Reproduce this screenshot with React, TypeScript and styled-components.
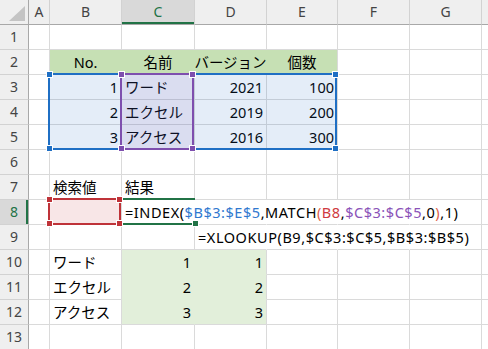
import React from "react";
import styled, { createGlobalStyle } from "styled-components";

const GlobalStyle = createGlobalStyle`
  html, body {
    margin: 0;
    padding: 0;
    background: #ffffff;
  }
  body {
    width: 488px;
    height: 349px;
    overflow: hidden;
    font-family: "Noto Sans", "Noto Sans CJK JP", sans-serif;
  }
`;

const GRID = "#dadada";
const HEAD_LINE = "#d2d2d2";
const HEAD_EDGE = "#a8a8a8";
const ACTIVE = "#217346";

const COL_WIDTHS = [29, 21, 72, 73, 72, 71, 72, 72];
const COLS = ["A", "B", "C", "D", "E", "F", "G", ""];

const Sheet = styled.div`
  position: relative;
  display: grid;
  grid-template-columns: ${COL_WIDTHS.map((w) => w + "px").join(" ")} 1fr;
  grid-auto-rows: 25px;
  width: 488px;
  height: 349px;
  overflow: hidden;
`;

const Corner = styled.div`
  box-sizing: border-box;
  background: #efefef;
  border-right: 1px solid ${HEAD_EDGE};
  border-bottom: 1px solid ${HEAD_EDGE};
  display: flex;
  align-items: flex-end;
  justify-content: flex-end;
  padding: 0 3px 3px 0;
`;

const ColHead = styled.div<{ $active?: boolean }>`
  box-sizing: border-box;
  background: ${(p) => (p.$active ? "#d9d9d9" : "#efefef")};
  border-right: 1px solid ${HEAD_LINE};
  border-bottom: 1px solid ${HEAD_EDGE};
  box-shadow: ${(p) => (p.$active ? `inset 0 -2px 0 ${ACTIVE}` : "none")};
  color: ${(p) => (p.$active ? ACTIVE : "#444444")};
  display: flex;
  align-items: center;
  justify-content: center;
  font-size: 14px;
  line-height: 1;
`;

const RowHead = styled.div<{ $active?: boolean }>`
  box-sizing: border-box;
  background: ${(p) => (p.$active ? "#d9d9d9" : "#efefef")};
  border-right: 1px solid ${HEAD_EDGE};
  border-bottom: 1px solid ${HEAD_LINE};
  box-shadow: ${(p) => (p.$active ? `inset -2px 0 0 ${ACTIVE}` : "none")};
  color: ${(p) => (p.$active ? ACTIVE : "#444444")};
  display: flex;
  align-items: center;
  justify-content: center;
  font-size: 14px;
  line-height: 1;
`;

type Align = "left" | "right" | "center";

const justify = { left: "flex-start", right: "flex-end", center: "center" };

const Cell = styled.div<{
  $align: Align;
  $fill?: string;
  $joinRight?: boolean;
  $joinDown?: boolean;
}>`
  box-sizing: border-box;
  min-width: 0;
  background: ${(p) => p.$fill || "transparent"};
  border-right: 1px solid
    ${(p) => (p.$joinRight ? p.$fill || "transparent" : GRID)};
  border-bottom: 1px solid ${(p) => (p.$joinDown ? p.$fill : GRID)};
  display: flex;
  align-items: center;
  justify-content: ${(p) => justify[p.$align]};
  padding: 0 3px;
  font-size: 14.5px;
  line-height: 1;
  color: #000000;
  white-space: nowrap;
`;

const Formula = styled.span`
  letter-spacing: 0.55px;
`;

const Tok = styled.span<{ $c: string }>`
  color: ${(p) => p.$c};
`;

const RefBox = styled.div<{
  $x: number;
  $y: number;
  $w: number;
  $h: number;
  $color: string;
  $tint: string;
}>`
  position: absolute;
  box-sizing: border-box;
  left: ${(p) => p.$x}px;
  top: ${(p) => p.$y}px;
  width: ${(p) => p.$w}px;
  height: ${(p) => p.$h}px;
  border: 2px solid ${(p) => p.$color};
  background: ${(p) => p.$tint};
  pointer-events: none;
`;

/* the editing cell: its sides are covered by the neighbour box and by the text */
const EditFrame = styled.div<{ $x: number; $y: number; $w: number; $h: number }>`
  position: absolute;
  box-sizing: border-box;
  left: ${(p) => p.$x}px;
  top: ${(p) => p.$y}px;
  width: ${(p) => p.$w}px;
  height: ${(p) => p.$h}px;
  border-top: 2px solid ${ACTIVE};
  border-bottom: 2px solid ${ACTIVE};
  pointer-events: none;
`;

const Handle = styled.span<{ $color: string; $at: "tl" | "tr" | "bl" | "br" }>`
  position: absolute;
  box-sizing: border-box;
  width: 7px;
  height: 7px;
  background: ${(p) => p.$color};
  border: 1px solid #ffffff;
  ${(p) => (p.$at[0] === "t" ? "top: -4px;" : "bottom: -4px;")}
  ${(p) => (p.$at[1] === "l" ? "left: -4px;" : "right: -4px;")}
`;

const BLUE = "#1f6fc4";
const PURPLE = "#7e4fae";
const RED = "#bf3339";

type Spec = {
  text?: React.ReactNode;
  align?: Align;
  fill?: string;
  joinRight?: boolean;
  joinDown?: boolean;
};

const HEAD_FILL = "#c6e0b4";
const RESULT_FILL = "#e2efda";

const formula1 = (
  <Formula>
    <Tok $c="#000">=INDEX(</Tok>
    <Tok $c="#2f78cf">$B$3:$E$5</Tok>
    <Tok $c="#000">,MATCH</Tok>
    <Tok $c="#e0604a">(</Tok>
    <Tok $c="#cf3a40">B8</Tok>
    <Tok $c="#000">,</Tok>
    <Tok $c="#8a52b8">$C$3:$C$5</Tok>
    <Tok $c="#000">,0</Tok>
    <Tok $c="#e0604a">)</Tok>
    <Tok $c="#000">,1)</Tok>
  </Formula>
);

const formula2 = <Formula>=XLOOKUP(B9,$C$3:$C$5,$B$3:$B$5)</Formula>;

const cells: Record<string, Spec> = {
  B2: { text: "No.", align: "center", fill: HEAD_FILL, joinRight: true },
  C2: { text: "名前", align: "center", fill: HEAD_FILL, joinRight: true },
  D2: { text: "バージョン", align: "center", fill: HEAD_FILL, joinRight: true },
  E2: { text: "個数", align: "center", fill: HEAD_FILL },
  B3: { text: "1", align: "right" },
  C3: { text: "ワード" },
  D3: { text: "2021", align: "right" },
  E3: { text: "100", align: "right" },
  B4: { text: "2", align: "right" },
  C4: { text: "エクセル" },
  D4: { text: "2019", align: "right" },
  E4: { text: "200", align: "right" },
  B5: { text: "3", align: "right" },
  C5: { text: "アクセス" },
  D5: { text: "2016", align: "right" },
  E5: { text: "300", align: "right" },
  B7: { text: "検索値" },
  C7: { text: "結果" },
  C8: { text: formula1, joinRight: true },
  D8: { joinRight: true },
  E8: { joinRight: true },
  F8: { joinRight: true },
  D9: { text: formula2, joinRight: true },
  E9: { joinRight: true },
  F9: { joinRight: true },
  B10: { text: "ワード" },
  B11: { text: "エクセル" },
  B12: { text: "アクセス" },
  C10: { text: "1", align: "right", fill: RESULT_FILL, joinRight: true, joinDown: true },
  D10: { text: "1", align: "right", fill: RESULT_FILL, joinDown: true },
  C11: { text: "2", align: "right", fill: RESULT_FILL, joinRight: true, joinDown: true },
  D11: { text: "2", align: "right", fill: RESULT_FILL, joinDown: true },
  C12: { text: "3", align: "right", fill: RESULT_FILL, joinRight: true },
  D12: { text: "3", align: "right", fill: RESULT_FILL },
};

const ROWS = Array.from({ length: 13 }, (_, i) => i + 1);

const CornerMark = () => (
  <svg width="16" height="15" viewBox="0 0 16 15">
    <polygon points="16,0 16,15 0,15" fill="#c4c4c4" />
  </svg>
);

const Corners = ({ color, only }: { color: string; only?: "br" }) => (
  <>
    {(only ? [only] : (["tl", "tr", "bl", "br"] as const)).map((at) => (
      <Handle key={at} $color={color} $at={at} />
    ))}
  </>
);

export default function App() {
  return (
    <>
      <GlobalStyle />
      <Sheet>
        <Corner>
          <CornerMark />
        </Corner>
        {COLS.map((c, i) => (
          <ColHead key={"h" + i} $active={c === "C"}>
            {c}
          </ColHead>
        ))}
        {ROWS.map((r) => (
          <React.Fragment key={r}>
            <RowHead $active={r === 8}>{r}</RowHead>
            {COLS.map((c, i) => {
              const spec = cells[c + r] || {};
              return (
                <Cell
                  key={i}
                  $align={spec.align || "left"}
                  $fill={spec.fill}
                  $joinRight={spec.joinRight}
                  $joinDown={spec.joinDown}
                >
                  {spec.text}
                </Cell>
              );
            })}
          </React.Fragment>
        ))}

        <RefBox $x={48} $y={73} $w={289} $h={77} $color={BLUE} $tint="rgba(30,110,200,0.12)">
          <Corners color={BLUE} />
        </RefBox>
        <RefBox $x={120} $y={73} $w={74} $h={77} $color={PURPLE} $tint="rgba(120,70,170,0.09)">
          <Corners color={PURPLE} />
        </RefBox>
        <EditFrame $x={121} $y={198} $w={74} $h={27}>
          <Corners color={ACTIVE} only="br" />
        </EditFrame>
        <RefBox $x={48} $y={198} $w={73} $h={27} $color={RED} $tint="rgba(200,50,60,0.12)">
          <Corners color={RED} />
        </RefBox>
      </Sheet>
    </>
  );
}
